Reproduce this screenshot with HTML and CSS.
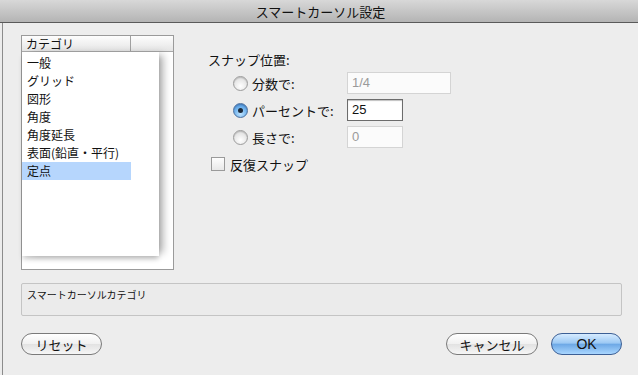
FILE: index.html
```html
<html>
<head>
<title>スマートカーソル設定</title>
<link rel="stylesheet" href="styles.css">
</head>
<body>
<div id="dialog">
    <div class="titlebar">スマートカーソル設定</div>
    <div class="main">
        <div class="catbox">
            <div class="cathead">
                <span class="colname">カテゴリ</span>
                <span class="colrest"></span>
            </div>
            <div class="catlist">
                <div class="item">一般</div>
                <div class="item">グリッド</div>
                <div class="item">図形</div>
                <div class="item">角度</div>
                <div class="item">角度延長</div>
                <div class="item">表面(鉛直・平行)</div>
                <div class="item selected">定点</div>
            </div>
        </div>
        <div class="settings">
            <div class="heading">スナップ位置:</div>
            <div class="row">
                <span class="radio"></span>
                <span class="label">分数で:</span>
                <span class="field wide disabled">1/4</span>
            </div>
            <div class="row">
                <span class="radio on"><span class="dot"></span></span>
                <span class="label">パーセントで:</span>
                <span class="field active">25</span>
            </div>
            <div class="row">
                <span class="radio"></span>
                <span class="label">長さで:</span>
                <span class="field disabled">0</span>
            </div>
            <div class="checkrow">
                <span class="check"></span>
                <span>反復スナップ</span>
            </div>
        </div>
    </div>
    <div class="desc">スマートカーソルカテゴリ</div>
    <div class="buttons">
        <button class="btn reset">リセット</button>
        <span class="spacer"></span>
        <button class="btn cancel">キャンセル</button>
        <button class="btn ok">OK</button>
    </div>
</div>
</body>
</html>
```
FILE: styles.css
```css
body {
    margin: 0;
    background: #ececec;
    font-family: "Noto Sans CJK JP", "Noto Sans", sans-serif;
    color: #111;
}
#dialog {
    width: 636px;
    height: 375px;
    margin-left: 2px;
    border-left: 1px solid #8c8c8c;
    background: #ededed;
    box-sizing: border-box;
}
.titlebar {
    height: 22px;
    line-height: 24px;
    text-align: center;
    font-size: 13px;
    background: linear-gradient(#d8d8d8, #c6c6c6 50%, #b4b4b4);
    border-bottom: 1px solid #5a5a5a;
    margin-left: -3px;
    padding-left: 3px;
    color: #111;
}
.main {
    display: flex;
    padding: 12px 0 0 18px;
}
.catbox {
    width: 151px;
    height: 233px;
    border: 1px solid #9a9a9a;
    background: #fff;
    display: flex;
    flex-direction: column;
}
.cathead {
    display: flex;
    height: 15px;
    border-bottom: 1px solid #a8a8a8;
    background: linear-gradient(#fdfdfd, #f1f1f1 50%, #e4e4e4);
    font-size: 12px;
    line-height: 16px;
}
.colname {
    width: 104px;
    padding-left: 4px;
    border-right: 1px solid #a0a0a0;
}
.catlist {
    width: 137px;
    height: 204px;
    padding-top: 2px;
    box-sizing: border-box;
    background: #fff;
    box-shadow: 7px 0 8px -3px rgba(0, 0, 0, 0.32), 0 4px 5px -1px rgba(0, 0, 0, 0.22);
}
.item {
    height: 18px;
    line-height: 18px;
    font-size: 12px;
    padding-left: 5px;
    width: 104px;
}
.item.selected {
    background: #b6d6fd;
}
.settings {
    margin-left: 34px;
    padding-top: 16px;
    font-size: 13px;
}
.heading {
    height: 18px;
    line-height: 18px;
}
.row {
    display: flex;
    align-items: center;
    height: 26px;
    margin-left: 25px;
    margin-top: 1px;
}
.row:first-of-type {
    margin-top: 5px;
}
.radio {
    width: 13px;
    height: 13px;
    border-radius: 50%;
    border: 1px solid #9c9c9c;
    background: radial-gradient(circle at 50% 70%, #ffffff, #e6e6e6 60%, #cfcfcf);
    display: flex;
    align-items: center;
    justify-content: center;
    box-shadow: inset 0 1px 1px rgba(0, 0, 0, 0.15);
}
.radio.on {
    border-color: #4a6f9e;
    background: radial-gradient(circle at 50% 75%, #bfe4ff, #6eb1ec 55%, #3d7fcd);
}
.dot {
    width: 5px;
    height: 5px;
    border-radius: 50%;
    background: #1c2a3a;
}
.label {
    width: 95px;
    padding-left: 4px;
}
.field {
    width: 50px;
    height: 20px;
    line-height: 20px;
    padding-left: 4px;
    border: 1px solid #b9b9b9;
    background: #fff;
    font-family: "Liberation Sans", sans-serif;
    font-size: 13px;
}
.field.wide {
    width: 98px;
}
.field.disabled {
    color: #9a9a9a;
    border-color: #d4d4d4;
    background: #fbfbfb;
}
.field.active {
    border: 1px solid #6c6c6c;
    box-shadow: inset 0 1px 1px rgba(0, 0, 0, 0.25);
}
.checkrow {
    display: flex;
    align-items: center;
    gap: 5px;
    margin-top: 5px;
    margin-left: 3px;
    height: 18px;
}
.check {
    width: 12px;
    height: 12px;
    border: 1px solid #9a9a9a;
    background: linear-gradient(#fdfdfd, #e8e8e8);
}
.desc {
    margin: 13px 16px 0 18px;
    border: 1px solid #c4c4c4;
    border-radius: 2px;
    background: #ebebeb;
    font-size: 10px;
    padding: 3px 0 0 5px;
    box-sizing: border-box;
    height: 33px;
}
.buttons {
    display: flex;
    margin: 17px 16px 0 18px;
    align-items: center;
}
.spacer {
    flex: 1;
}
.btn {
    height: 22px;
    border-radius: 11px;
    border: 1px solid #7a7a7a;
    background: linear-gradient(#ffffff, #f0f0f0 50%, #e2e2e2 51%, #f6f6f6);
    font-family: "Noto Sans CJK JP", "Noto Sans", sans-serif;
    font-size: 13px;
    padding: 0;
    color: #111;
}
.reset {
    width: 81px;
}
.cancel {
    width: 92px;
    margin-right: 13px;
}
.ok {
    width: 71px;
    border-color: #3c5f95;
    background: linear-gradient(#d6ebff, #9cc9f4 45%, #6ea9e6 52%, #a9d6ff);
    font-family: "Liberation Sans", sans-serif;
    font-size: 14px;
}
```
